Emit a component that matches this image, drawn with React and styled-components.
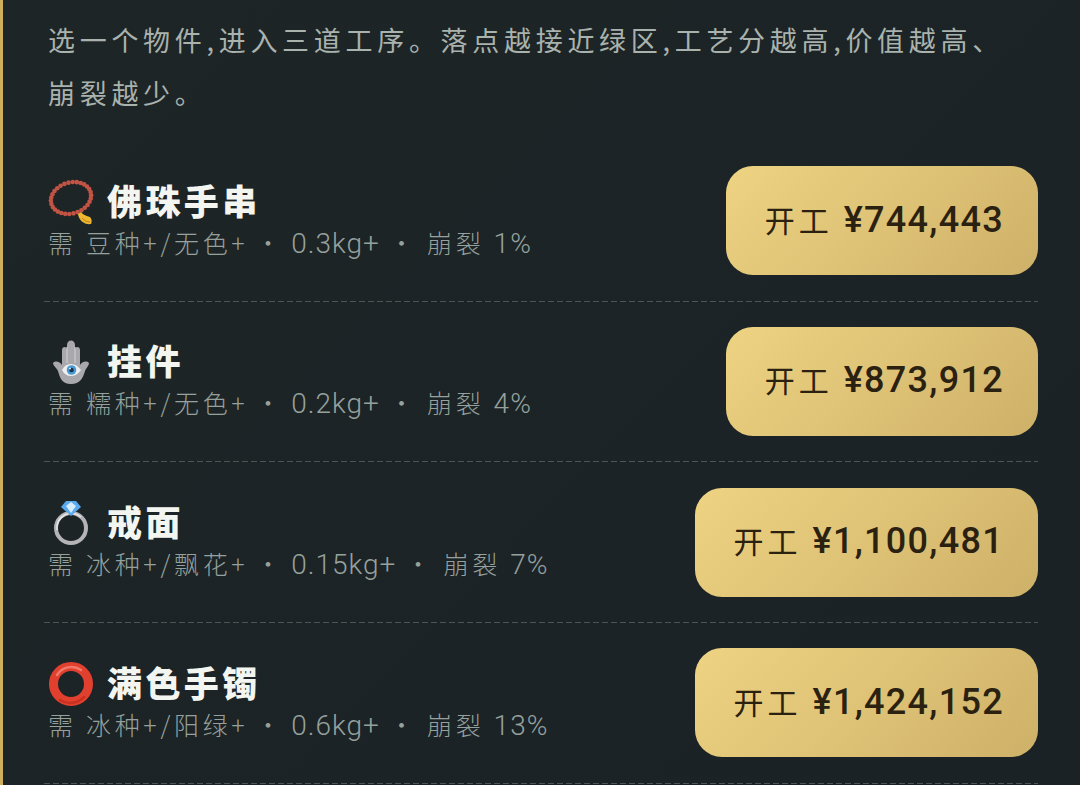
import styled, { createGlobalStyle } from "styled-components"

const GlobalStyle = createGlobalStyle`
html, body {
  margin: 0;
  padding: 0;
  background: #1c2326;
}
#root {
  height: 785px;
  overflow: hidden;
}
`
const Panel = styled.div`
height: 785px;
box-sizing: border-box;
background: linear-gradient(135deg, #1e2526, #1a2226);
border-left: 3px solid #cfae5e;
padding: 14px 42px 0 41px;
font-family: "Noto Sans CJK SC", Roboto, sans-serif;
overflow: hidden;
`
const Intro = styled.p`
margin: 0 0 22px;
padding: 0 30px 0 4px;
font-size: 27px;
font-weight: 400;
line-height: 52.5px;
letter-spacing: 4.7px;
color: #a9b2ad;
`
const Row = styled.div`
height: 160.67px;
box-sizing: border-box;
padding: 0 0 1px 4px;
display: flex;
align-items: center;
justify-content: space-between;
background: repeating-linear-gradient(90deg, #4a5554 0 6px, transparent 6px 9px) left bottom / 100% 1px no-repeat;
`
const Info = styled.div`
display: flex;
flex-direction: column;
`
const TitleLine = styled.div`
display: flex;
align-items: center;
gap: 13px;
height: 44px;
`
const Title = styled.span`
font-size: 35px;
font-weight: 900;
letter-spacing: 3.4px;
line-height: 44px;
padding-bottom: 4px;
color: #f3f5f0;
`
const Emoji = styled.svg`
width: 46px;
height: 46px;
flex: none;
`
const Sub = styled.div`
font-size: 25px;
font-weight: 300;
line-height: 36px;
letter-spacing: 3.7px;
color: #96a19d;
white-space: pre;
`
const Sep = styled.span`
margin: 0 ${({ $gap }) => $gap};
`
const Num = styled.span`
font-family: Roboto, sans-serif;
font-weight: 300;
font-size: 28px;
letter-spacing: 1px;
`
const WorkButton = styled.button`
height: 109px;
box-sizing: border-box;
padding: 0 34px 2px 39px;
border: none;
border-radius: 27px;
background: linear-gradient(135deg, #eed383, #ceb168);
display: flex;
align-items: center;
gap: 11px;
color: #2b2110;
font-family: "Noto Sans CJK SC", Roboto, sans-serif;
`
const Label = styled.span`
font-size: 30px;
font-weight: 400;
letter-spacing: 4px;
padding-bottom: 2px;
`
const Price = styled.span`
font-family: Roboto, sans-serif;
font-size: 36px;
font-weight: 500;
letter-spacing: 1.3px;
`

// 念珠沿着一个斜的椭圆排开
const beadPoints = Array.from({ length: 30 }, (_, i) => {
  const a = (Math.PI * 2 * i) / 30
  const rot = -0.3
  const ex = 20.5 * Math.cos(a)
  const ey = 15.5 * Math.sin(a)
  return {
    x: 23 + ex * Math.cos(rot) - ey * Math.sin(rot),
    y: 19 + ex * Math.sin(rot) + ey * Math.cos(rot),
  }
})

const BeadsIcon = () => (
  <Emoji viewBox="0 0 46 46">
    {beadPoints.map((p, i) => (
      <circle key={i} cx={p.x} cy={p.y} r="2.3" fill="#c25445" />
    ))}
    <path d="M30 35l3-2c2 3 6 4 9 5 2 2 2 5 1 7-6 1-12-3-13-10z" fill="#eeb730" />
    <path d="M34 39c2 2 4 4 8 4" stroke="#b97f16" strokeWidth="1" fill="none" />
  </Emoji>
)

const HamsaIcon = () => (
  <Emoji viewBox="0 0 46 46">
    <path
      d="M5 24c3-3 7-1 9 2V11c0-4 5-4 5 0V6c0-6 8-6 8 0v5c0-4 5-4 5 0v15c2-3 6-5 9-2 0 3-3 5-4 8-2 7-5 13-14 13S12 39 10 32C9 29 5 27 5 24z"
      fill="#a9a9ad"
    />
    <path d="M19 8v16M27 8v16" stroke="#c6c6ca" strokeWidth="1.4" fill="none" />
    <path d="M14 31c2-4 5-6 9-6s7 2 10 6c-3 4-6 6-10 6s-7-2-9-6z" fill="#efeff0" />
    <circle cx="23.5" cy="31" r="4.8" fill="#4a9bd4" />
    <circle cx="23.5" cy="31" r="2.3" fill="#17324d" />
    <circle cx="22" cy="29.6" r="0.9" fill="#fff" />
  </Emoji>
)

const RingIcon = () => (
  <Emoji viewBox="0 0 46 46">
    <circle cx="23" cy="28" r="15" fill="none" stroke="#b4b4b6" strokeWidth="4" />
    <path d="M9 30a14.5 14.5 0 0 1 24-13" fill="none" stroke="#e6e6e6" strokeWidth="1.6" />
    <path d="M13 7l5-6h10l5 6-10 9z" fill="#5aa9ec" />
    <path d="M18 6l5-4 5 4-5 7z" fill="#d6ecfb" />
  </Emoji>
)

const RedRingIcon = () => (
  <Emoji viewBox="0 0 46 46">
    <circle cx="23" cy="23" r="17.5" fill="none" stroke="#e2402f" strokeWidth="9" />
    <path d="M9 14a17 17 0 0 1 24-5" fill="none" stroke="#f2786a" strokeWidth="2.5" strokeLinecap="round" />
    <path d="M36 36a19 19 0 0 1-24 3" fill="none" stroke="#c8301f" strokeWidth="2.5" strokeLinecap="round" />
  </Emoji>
)

const items = [
  { icon: <BeadsIcon />, name: "佛珠手串", need: "需 豆种+/无色+", weight: "0.3kg+", risk: "1%", price: "¥744,443" },
  { icon: <HamsaIcon />, name: "挂件", need: "需 糯种+/无色+", weight: "0.2kg+", risk: "4%", price: "¥873,912" },
  { icon: <RingIcon />, name: "戒面", need: "需 冰种+/飘花+", weight: "0.15kg+", risk: "7%", price: "¥1,100,481" },
  { icon: <RedRingIcon />, name: "满色手镯", need: "需 冰种+/阳绿+", weight: "0.6kg+", risk: "13%", price: "¥1,424,152" },
]

export default function App() {
  return (
    <>
      <GlobalStyle />
      <Panel>
        <Intro>选一个物件,进入三道工序。落点越接近绿区,工艺分越高,价值越高、崩裂越少。</Intro>
        {items.map(item => (
          <Row key={item.name}>
            <Info>
              <TitleLine>
                {item.icon}
                <Title>{item.name}</Title>
              </TitleLine>
              <Sub>
                {item.need}<Sep $gap="-2.2px">{" · "}</Sep><Num>{item.weight}</Num><Sep $gap="0px">{" · "}</Sep>崩裂 <Num>{item.risk}</Num>
              </Sub>
            </Info>
            <WorkButton>
              <Label>开工</Label>
              <Price>{item.price}</Price>
            </WorkButton>
          </Row>
        ))}
      </Panel>
    </>
  )
}
